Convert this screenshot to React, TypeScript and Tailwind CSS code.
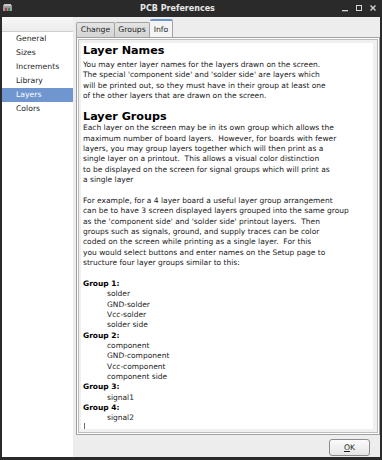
import React from 'react';

const namesText = [
  'You may enter layer names for the layers drawn on the screen.',
  "The special 'component side' and 'solder side' are layers which",
  'will be printed out, so they must have in their group at least one',
  'of the other layers that are drawn on the screen.',
  '',
];

const groupsText = [
  'Each layer on the screen may be in its own group which allows the',
  'maximum number of board layers.  However, for boards with fewer',
  'layers, you may group layers together which will then print as a',
  'single layer on a printout.  This allows a visual color distinction',
  'to be displayed on the screen for signal groups which will print as',
  'a single layer',
  '',
  'For example, for a 4 layer board a useful layer group arrangement',
  'can be to have 3 screen displayed layers grouped into the same group',
  "as the 'component side' and 'solder side' printout layers.  Then",
  'groups such as signals, ground, and supply traces can be color',
  'coded on the screen while printing as a single layer.  For this',
  'you would select buttons and enter names on the Setup page to',
  'structure four layer groups similar to this:',
  '',
];

const groups = [
  { name: 'Group 1:', layers: ['solder', 'GND-solder', 'Vcc-solder', 'solder side'] },
  { name: 'Group 2:', layers: ['component', 'GND-component', 'Vcc-component', 'component side'] },
  { name: 'Group 3:', layers: ['signal1'] },
  { name: 'Group 4:', layers: ['signal2'] },
];

const pages = ['General', 'Sizes', 'Increments', 'Library', 'Layers', 'Colors'];

const Line = ({ text }: { text: string }) => (
  <div className="h-[10.36px] whitespace-pre">{text || '\u00a0'}</div>
);

const App = () => {
  return (
    <div
      className="w-[382px] h-[460px] bg-[#2a2a2a] flex flex-col overflow-hidden"
      style={{ fontFamily: '"DejaVu Sans", Verdana, sans-serif' }}
    >
      {/* barre de titre */}
      <div className="h-[17px] relative flex items-center justify-center pr-[27px]">
        <svg className="absolute left-[3px] top-[4px]" width="9" height="8" viewBox="0 0 9 8">
          <rect x="0" y="1" width="9" height="6" fill="#9a9a9a" />
          <rect x="1" y="0" width="7" height="2" fill="#c9c9c9" />
          <rect x="2" y="4" width="2" height="3" fill="#b23a3a" />
          <rect x="5" y="4" width="2" height="3" fill="#3a8a5a" />
        </svg>
        <span className="text-[8px] font-bold text-[#e8e8e8] leading-none">PCB Preferences</span>
        <div className="absolute right-[6px] top-[4px] flex items-center gap-[8px]">
          <svg width="6" height="8" viewBox="0 0 6 8">
            <rect x="0" y="6" width="6" height="1.3" fill="#d6d6d6" />
          </svg>
          <svg width="6" height="8" viewBox="0 0 6 8">
            <rect x="0.5" y="1.5" width="5" height="5" fill="none" stroke="#d6d6d6" strokeWidth="1" />
          </svg>
          <svg width="6" height="8" viewBox="0 0 6 8">
            <path d="M0.5 1.5 L5.5 6.5 M5.5 1.5 L0.5 6.5" stroke="#d6d6d6" strokeWidth="1.3" />
          </svg>
        </div>
      </div>

      <div className="flex-1 flex mx-[2px] mb-[3px] bg-[#ededed] min-h-0">
        {/* liste des pages */}
        <div className="w-[71px] bg-white flex flex-col text-[7.7px] text-[#1e1e1e]">
          <div className="h-[15px] bg-gradient-to-b from-[#f7f7f7] to-[#ececec] border-b border-[#cdcdcd]" />
          {pages.map((p) => (
            <div
              key={p}
              className={
                'h-[14px] pl-[14px] flex items-center ' +
                (p === 'Layers' ? 'bg-[#7096d0] text-white' : '')
              }
            >
              {p}
            </div>
          ))}
        </div>

        <div className="w-[3px]" />

        {/* onglets */}
        <div className="w-[304px] flex flex-col">
          <div className="h-[20px] pt-[2px] flex items-end text-[7.7px] text-[#1e1e1e]">
            <div className="h-[15px] w-[39px] flex items-center justify-center bg-gradient-to-b from-[#e4e4e4] to-[#d4d4d4] border border-b-0 border-[#a4a4a4] rounded-t-[2px]">
              Change
            </div>
            <div className="h-[15px] w-[35px] flex items-center justify-center bg-gradient-to-b from-[#e4e4e4] to-[#d4d4d4] border border-l-0 border-b-0 border-[#a4a4a4] rounded-t-[2px]">
              Groups
            </div>
            <div className="h-[18px] w-[23px] flex justify-center pt-[3px] bg-[#f4f4f4] border border-l-0 border-b-0 border-[#a4a4a4] border-t-2 border-t-[#7096d0] rounded-t-[2px]">
              Info
            </div>
          </div>

          <div className="h-[398px] border border-[#a0a0a0] bg-white p-px">
            <div className="h-full border border-[#bdbdbd] bg-[#f0f0f0] pl-[2px] pr-[4px] pt-[3px] pb-[3px]">
              <div className="h-full bg-white pl-[2px] text-[7.5px] text-[#1a1a1a] overflow-hidden relative">
                <div className="h-[16px] leading-[16px] text-[11.2px] font-bold text-black">Layer Names</div>
                {namesText.map((t, i) => (
                  <Line key={'n' + i} text={t} />
                ))}
                <div className="h-[11.6px] leading-[11.6px] text-[11.2px] font-bold text-black">Layer Groups</div>
                {groupsText.map((t, i) => (
                  <Line key={'g' + i} text={t} />
                ))}
                {groups.map((g) => (
                  <React.Fragment key={g.name}>
                    <div className="h-[10.36px] font-bold text-black">{g.name}</div>
                    {g.layers.map((l) => (
                      <div key={l} className="h-[10.36px] pl-[24px]">
                        {l}
                      </div>
                    ))}
                  </React.Fragment>
                ))}
                <div className="ml-[1px] w-px h-[10px] bg-[#6a6a6a]" />
              </div>
            </div>
          </div>

          <div className="flex-1 flex justify-end items-start pt-[4px] pr-[10px]">
            <button className="h-[17px] w-[41px] border border-[#8c8c8c] rounded-[3px] bg-gradient-to-b from-[#fbfbfb] to-[#e6e6e6] text-[7.7px] text-[#1e1e1e] flex items-center justify-center">
              <span>
                <span className="underline">O</span>K
              </span>
            </button>
          </div>
        </div>
      </div>
    </div>
  );
};

export default App;
